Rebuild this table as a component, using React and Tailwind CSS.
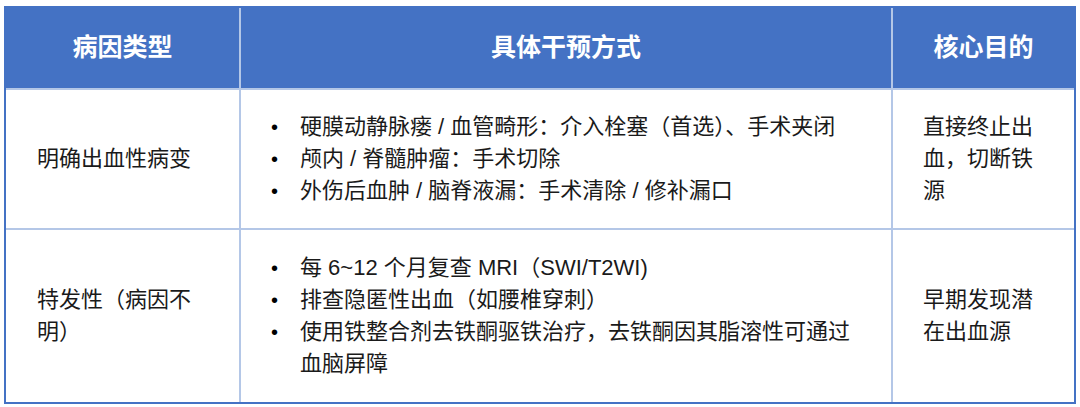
import React from 'react';

const font = { fontFamily: '"Liberation Sans", "Noto Sans CJK SC", sans-serif' };

const rows = [
    {
        type: '明确出血性病变',
        items: [
            '硬膜动静脉瘘 / 血管畸形：介入栓塞（首选）、手术夹闭',
            '颅内 / 脊髓肿瘤：手术切除',
            '外伤后血肿 / 脑脊液漏：手术清除 / 修补漏口',
        ],
        goal: '直接终止出血，切断铁源',
        h: 'h-[140px]',
    },
    {
        type: '特发性（病因不明）',
        items: [
            '每 6~12 个月复查 MRI（SWI/T2WI)',
            '排查隐匿性出血（如腰椎穿刺）',
            '使用铁整合剂去铁酮驱铁治疗，去铁酮因其脂溶性可通过血脑屏障',
        ],
        goal: '早期发现潜在出血源',
        h: 'h-[172px]',
    },
];

const Cell = ({ className = '', children }) => (
    <div className={`flex items-center border-[#b4c7e7] ${className}`}>{children}</div>
);

export default function App() {
    return (
        <div className="bg-white w-[1080px] h-[407px] pt-[6px] pl-[4px]" style={font}>
            <div className="w-[1072px] border-2 border-[#4472c4]">
                <div className="grid grid-cols-[235px_652px_181px] h-[82px] bg-[#4472c4] text-white font-bold text-[25px]">
                    <Cell className="justify-center border-r-2 border-b-2">病因类型</Cell>
                    <Cell className="justify-center border-r-2 border-b-2">具体干预方式</Cell>
                    <Cell className="justify-center border-b-2">核心目的</Cell>
                </div>
                {rows.map((r, i) => (
                    <div key={i} className={`grid grid-cols-[235px_652px_181px] ${r.h} text-[22px] leading-[32px] text-[#1a1a1a]`}>
                        <Cell className={`px-[31px] border-r-2 ${i === 0 ? 'border-b-2' : ''}`}>{r.type}</Cell>
                        <Cell className={`pl-[30px] border-r-2 ${i === 0 ? 'border-b-2' : ''}`}>
                            <ul className="w-[600px]">
                                {r.items.map((t, j) => (
                                    <li key={j} className="flex">
                                        <span className="w-[29px] shrink-0 text-[20px] text-black">•</span>
                                        <span>{t}</span>
                                    </li>
                                ))}
                            </ul>
                        </Cell>
                        <Cell className={`px-[30px] ${i === 0 ? 'border-b-2' : ''}`}>{r.goal}</Cell>
                    </div>
                ))}
            </div>
        </div>
    );
}
